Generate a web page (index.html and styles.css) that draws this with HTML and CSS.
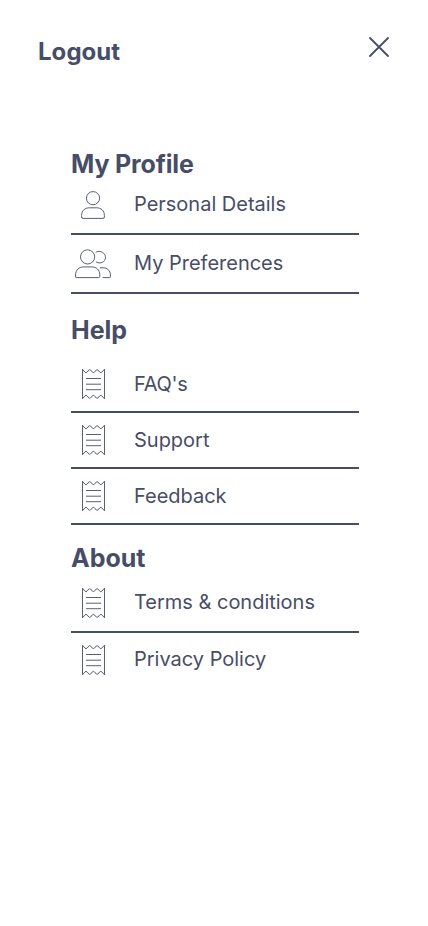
FILE: index.html
```html
<!DOCTYPE html>
<html lang="en">
<head>
<meta charset="utf-8">
<title>Menu</title>
<link rel="stylesheet" href="styles.css">
</head>
<body>
<svg class="defs" width="0" height="0">
  <symbol id="receipt" viewBox="0 0 24 32">
    <path d="M1.5 1.2L4 4.2Q5 5 6 4.2L7.9 2Q8.7 1.2 9.5 2L11.4 4.2Q12.4 5 13.4 4.2L15.3 2Q16.1 1.2 16.9 2L18.8 4.2Q19.8 5 20.8 4.2L23.5 1.2V30.8L20.8 27.8Q19.8 27 18.8 27.8L16.9 30Q16.1 30.8 15.3 30L13.4 27.8Q12.4 27 11.4 27.8L9.5 30Q8.7 30.8 7.9 30L6 27.8Q5 27 4 27.8L1.5 30.8Z"/>
    <path d="M5 10.5H20M5 16.2H20M5 21.7H20"/>
  </symbol>
</svg>
<header class="top">
  <a class="logout">Logout</a>
  <svg class="close" viewBox="0 0 20 20"><path d="M1 1L19 19M19 1L1 19"/></svg>
</header>
<main class="menu">
  <section class="group profile">
    <h2>My Profile</h2>
    <a class="row"><svg class="icon" viewBox="0 0 24 28"><circle cx="12" cy="7.2" r="6.6"/><path d="M.6 26V24.5C.6 19.5 4 16.8 8.5 16.8H15.5C20 16.8 23.4 19.5 23.4 24.5V26Q23.4 27.4 22 27.4H2Q.6 27.4 .6 26Z"/></svg><span>Personal Details</span></a>
    <a class="row"><svg class="icon wide" viewBox="0 0 36 30"><circle cx="12.6" cy="7.9" r="7.1"/><path d="M.6 28.1V26C.6 20.8 4 17.9 9 17.9H16.5C21.5 17.9 24.8 20.8 24.8 26V27.4Q24.8 28.6 23.6 28.6H1.2Q.6 28.6 .6 28.1ZM20.7 3.3C23.5 1.7 27 2.3 29.2 4.8C31.2 7.3 30.8 10.5 28.6 12.5C26.5 14.3 23.4 14.4 21 12.9M25 18.8H28C32.5 18.8 35.4 21.7 35.4 26V27.6Q35.4 28.6 34.4 28.6H27.6"/></svg><span>My Preferences</span></a>
  </section>
  <section class="group help">
    <h2>Help</h2>
    <a class="row"><svg class="icon"><use href="#receipt"/></svg><span class="faq">FAQ's</span></a>
    <a class="row"><svg class="icon"><use href="#receipt"/></svg><span>Support</span></a>
    <a class="row"><svg class="icon"><use href="#receipt"/></svg><span>Feedback</span></a>
  </section>
  <section class="group about">
    <h2>About</h2>
    <a class="row"><svg class="icon"><use href="#receipt"/></svg><span>Terms &amp; conditions</span></a>
    <a class="row"><svg class="icon"><use href="#receipt"/></svg><span>Privacy Policy</span></a>
  </section>
</main>
</body>
</html>
```
FILE: styles.css
```css
* { box-sizing: border-box; }
body {
  margin: 0;
  background: #fff;
  color: #474d66;
  font-family: Inter, sans-serif;
}
svg { fill: none; stroke: #474d66; flex: none; }
.defs { display: block; }
.top {
  display: flex;
  justify-content: space-between;
  padding: 37px 39px 0 38px;
  height: 152px;
}
.logout { font-size: 24px; line-height: 29px; font-weight: 700; letter-spacing: 0.05px; }
.close { width: 20px; height: 20px; stroke-width: 1.8; stroke-linecap: round; }
.menu { width: 288px; margin-left: 71px; }
h2 { margin: 0; font-size: 25px; line-height: 24px; font-weight: 700; }
.profile h2 { letter-spacing: -0.15px; }
.row {
  display: flex;
  align-items: center;
  height: 56px;
  border-bottom: 2px solid #474d66;
  font-size: 20px;
  line-height: 24px;
  font-weight: 370;
  letter-spacing: -0.01px;
}
.row span { margin-left: 19px; }
.row .faq { letter-spacing: -0.3px; }
.icon { width: 24px; height: 32px; margin: 0 10px; stroke-width: 0.9; }
.wide { width: 36px; height: 30px; margin: 0 4px; }
.profile .icon { height: 28px; }
.profile .wide { height: 30px; }
.profile .row { height: 59px; }
.profile span, .about span { padding-bottom: 2px; }
.help { margin-top: 24px; }
.help h2 { margin-bottom: 15px; }
.about { margin-top: 21px; }
.about h2 { margin-bottom: 4px; }
.about .row { height: 59px; }
.about .row:last-child { height: 54px; border: 0; }
```
